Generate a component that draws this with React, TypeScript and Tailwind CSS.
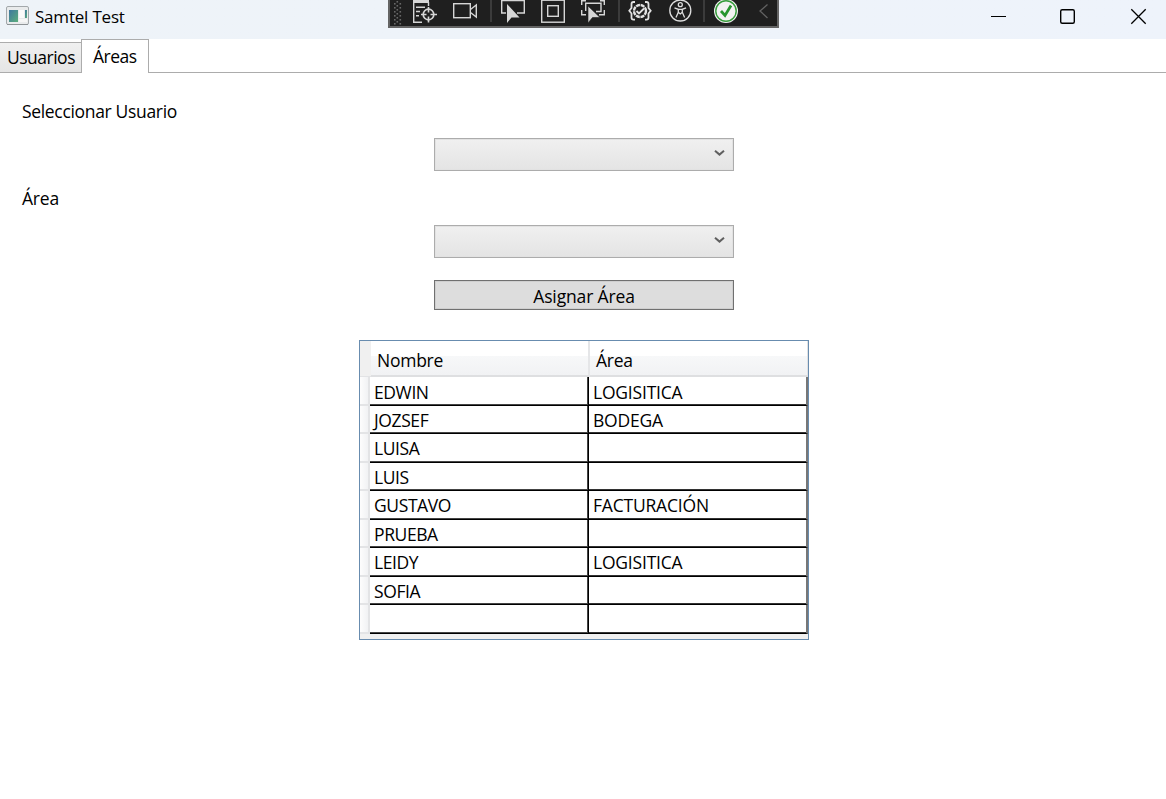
import React from "react";

const rows = [
  { name: "EDWIN", area: "LOGISITICA", h: "h-[29px] leading-[31px]" },
  { name: "JOZSEF", area: "BODEGA", h: "h-[28px] leading-[29px]" },
  { name: "LUISA", area: "", h: "h-[29px] leading-[29px]" },
  { name: "LUIS", area: "", h: "h-[28px] leading-[29px]" },
  { name: "GUSTAVO", area: "FACTURACIÓN", h: "h-[29px] leading-[29px]" },
  { name: "PRUEBA", area: "", h: "h-[28px] leading-[29px]" },
  { name: "LEIDY", area: "LOGISITICA", h: "h-[29px] leading-[29px]" },
  { name: "SOFIA", area: "", h: "h-[28px] leading-[29px]" },
  { name: "", area: "", h: "h-[29px] leading-[29px]" },
];

function AppIcon() {
  return (
    <svg width="23" height="20" viewBox="0 0 23 20" className="block">
      <defs>
        <linearGradient id="pane" x1="0" y1="0" x2="1" y2="1">
          <stop offset="0" stopColor="#3f77a0" />
          <stop offset="1" stopColor="#5cae7c" />
        </linearGradient>
      </defs>
      <rect x="0.5" y="0.5" width="22" height="18" rx="1.5" fill="#e9ebec" stroke="#a3a8ab" />
      <path d="M1 18.5H22" stroke="#8e9396" />
      <rect x="3" y="4" width="9" height="12" fill="url(#pane)" />
      <rect x="13" y="4" width="5" height="8" fill="#fafafa" />
      <rect x="13" y="13" width="8" height="3" fill="#f6f6f6" />
      <rect x="19" y="4" width="2" height="8" fill="url(#pane)" />
    </svg>
  );
}

function DebugToolbar() {
  return (
    <svg width="391" height="28" viewBox="388 0 391 28" className="block" fill="none">
      <rect x="388" y="-2" width="391" height="30" fill="#646464" />
      <rect x="390" y="-2" width="387" height="28" fill="#1f1f1f" />
      <g fill="#686868">
        {[1, 5, 9, 13, 17, 21].map((y) => (
          <g key={y}>
            <rect x="396.500" y={y} width="1.6" height="1.6" />
            <rect x="394" y={y + 2} width="1.6" height="1.6" />
            <rect x="399.500" y={y + 2} width="1.6" height="1.6" />
          </g>
        ))}
      </g>
      <g stroke="#464646" strokeWidth="1.5">
        <path d="M491 0V22M619 0V22M704 0V22" />
      </g>
      <g stroke="#d6d6d6" strokeWidth="1.4">
        <rect x="413" y="0" width="16" height="3" fill="#d6d6d6" stroke="none" />
        <path d="M413.700 2V22.300H422M428.500 2V6M416 7.200H425M416 11.500H420M416 15.800H419" />
        <circle cx="428.500" cy="14.500" r="5.300" strokeWidth="1.700" />
        <path d="M428.500 7V12.500M428.500 16.500V22.500M421 14.500H426.500M430.500 14.500H437" strokeWidth="1.600" />
        <rect x="453.700" y="3.700" width="16.600" height="14" />
        <path d="M470.500 9.500L476.300 5V17L470.500 12.500" />
        <path d="M501.700 0V13H506M501.700 0.500H524.300V13H517" />
        <rect x="541.700" y="0.200" width="22.600" height="22" />
        <rect x="547.700" y="5.700" width="10.600" height="10.600" />
        <path d="M581.700 5V0.700H586M600 0.700H604.300V5M604.300 10V14.700H599M581.700 10V14.700H586M585.700 11V3.200H601V11.500H596" />
      </g>
      <path d="M507 4V23L511.500 17.500H519.500Z" fill="#d6d6d6" />
      <path d="M588 6V23L592.500 17.500H600Z" fill="#d6d6d6" stroke="#1f1f1f" strokeWidth="0.600" />
      <g stroke="#e2e2e2" strokeWidth="1.8">
        <path d="M635 2H633.500Q631.500 2 631.500 4V8L629.300 10.800L631.500 13.500V17.500Q631.500 19.600 633.500 19.600H635M645 2H646.500Q648.500 2 648.500 4V8L650.700 10.800L648.500 13.500V17.500Q648.500 19.600 646.500 19.600H645" />
        <circle cx="640" cy="11" r="6" strokeWidth="2.4" strokeDasharray="4 0.700" />
        <path d="M636.500 11L639 13.500L644 8.500" />
      </g>
      <g stroke="#dedede" strokeWidth="1.3">
        <circle cx="680.300" cy="10.500" r="10.500" />
        <circle cx="680.300" cy="4.700" r="2" />
        <path d="M674.500 7.800L678.300 9.300V12.200L676 17.500M686.100 7.800L682.300 9.300V12.200L684.600 17.500M678.300 9.300H682.300M678.300 12.300L680.300 14L682.300 12.300" />
      </g>
      <circle cx="726" cy="11" r="12" fill="#f2f2f2" />
      <circle cx="726" cy="11" r="10.200" stroke="#369c3b" strokeWidth="1.4" />
      <path d="M721 11L725 15.500L731 5.500" stroke="#27952e" strokeWidth="2.700" />
      <path d="M767.500 4.500L760 11L767.500 18" stroke="#626262" strokeWidth="1.3" />
    </svg>
  );
}

function WindowControls() {
  return (
    <svg width="200" height="39" viewBox="966 0 200 39" className="block shrink-0" fill="none" stroke="#000">
      <path d="M991 16.500H1006" />
      <rect x="1060.700" y="9.700" width="13.600" height="13.600" rx="1.500" strokeWidth="1.400" />
      <path d="M1131.300 9.300L1145.700 23.700M1145.700 9.300L1131.300 23.700" strokeWidth="1.300" />
    </svg>
  );
}

function Combo() {
  return (
    <button
      type="button"
      className="flex h-[33px] w-[300px] justify-end border border-[#acacac] bg-linear-to-b from-[#f0f0f0] to-[#e4e4e4] pt-[11px] pr-[8px] shadow-[inset_0_0_0_1px_#e2e2e2]"
    >
      <svg width="11" height="8" viewBox="0 0 11 8" fill="none" className="block">
        <path d="M1 0.800L5.500 4.600L10 0.800" stroke="#606060" strokeWidth="2" />
      </svg>
    </button>
  );
}

function HeaderCell({ children, className }: { children: string; className: string }) {
  return (
    <div
      className={`h-[36px] border-b-2 border-[#dedfe1] bg-[linear-gradient(#fff_0px,#fff_15px,#f7f8f9_15px,#f1f2f4_34px)] leading-[38px] tracking-[-0.25px] ${className}`}
    >
      {children}
    </div>
  );
}

function Cell({ text, last }: { text: string; last?: boolean }) {
  return (
    <div
      className={`flex h-full w-[219px] border-b border-black bg-white pl-1 ${
        last
          ? "border-r-2 border-r-[#777] tracking-[-0.2px] shadow-[inset_0_-1px_0_#333]"
          : "border-r border-r-black tracking-[-0.4px] shadow-[inset_-1px_-1px_0_#444]"
      }`}
    >
      {text}
    </div>
  );
}

export default function App() {
  return (
    <div className="h-[799px] w-[1166px] overflow-hidden bg-white font-['Open_Sans','Noto_Sans',sans-serif] text-[17.5px] tracking-[-0.5px] text-black">
      <header className="relative flex h-[39px] items-start justify-between bg-linear-to-r from-[#eef3f8] to-[#eef3fb]">
        <div className="flex pt-[6px] pl-[6px]">
          <AppIcon />
          <span className="ml-[6px] text-[17px] leading-[22px] tracking-[-0.2px]">Samtel Test</span>
        </div>
        <WindowControls />
        <div className="absolute top-0 left-[388px]">
          <DebugToolbar />
        </div>
      </header>

      <nav className="flex h-[34px] items-end border-b border-[#acacac]">
        <div className="h-[30px] w-[81px] border-t border-[#acacac] bg-linear-to-b from-[#f0f0f0] to-[#e5e5e5] pl-[7px] leading-[29px]">
          Usuarios
        </div>
        <div className="-mb-px h-[34px] w-[68px] border border-b-0 border-[#acacac] bg-white pl-[11px] leading-[32px]">
          Áreas
        </div>
      </nav>

      <main>
        <div className="pt-[26px] pl-[22px] leading-[24px] tracking-[-0.33px]">Seleccionar Usuario</div>
        <div className="mt-[15px] ml-[434px]">
          <Combo />
        </div>
        <div className="mt-[15px] pl-[22px] leading-[24px] tracking-[-0.2px]">Área</div>
        <div className="mt-[15px] ml-[434px]">
          <Combo />
        </div>
        <button
          type="button"
          className="mt-[22px] ml-[434px] block h-[30px] w-[300px] border border-[#707070] bg-[#dddddd] leading-[30px] tracking-[-0.15px] shadow-[inset_0_0_0_1px_#cfcfcf]"
        >
          Asignar Área
        </button>

        <section className="mt-[30px] ml-[359px] h-[300px] w-[450px] border border-[#688caf] bg-[#f0f0f0]">
          <div className="flex">
            <div className="h-[36px] w-[11px] border-b border-[#e2e3e5] bg-[#f0f0f0]" />
            <HeaderCell className="w-[219px] border-r-2 border-r-[#e5e6e8] pl-[6px]">Nombre</HeaderCell>
            <HeaderCell className="w-[218px] border-r border-r-[#dfe1e3] pl-[6px]">Área</HeaderCell>
          </div>
          {rows.map((row, i) => (
            <div key={i} className={`flex ${row.h}`}>
              <div className="h-full w-[10px] border-r-2 border-b-2 border-[#e3e4e6] bg-linear-to-r from-[#fdfdfd] to-[#f1f2f4]" />
              <Cell text={row.name} />
              <Cell text={row.area} last />
            </div>
          ))}
        </section>
      </main>
    </div>
  );
}
